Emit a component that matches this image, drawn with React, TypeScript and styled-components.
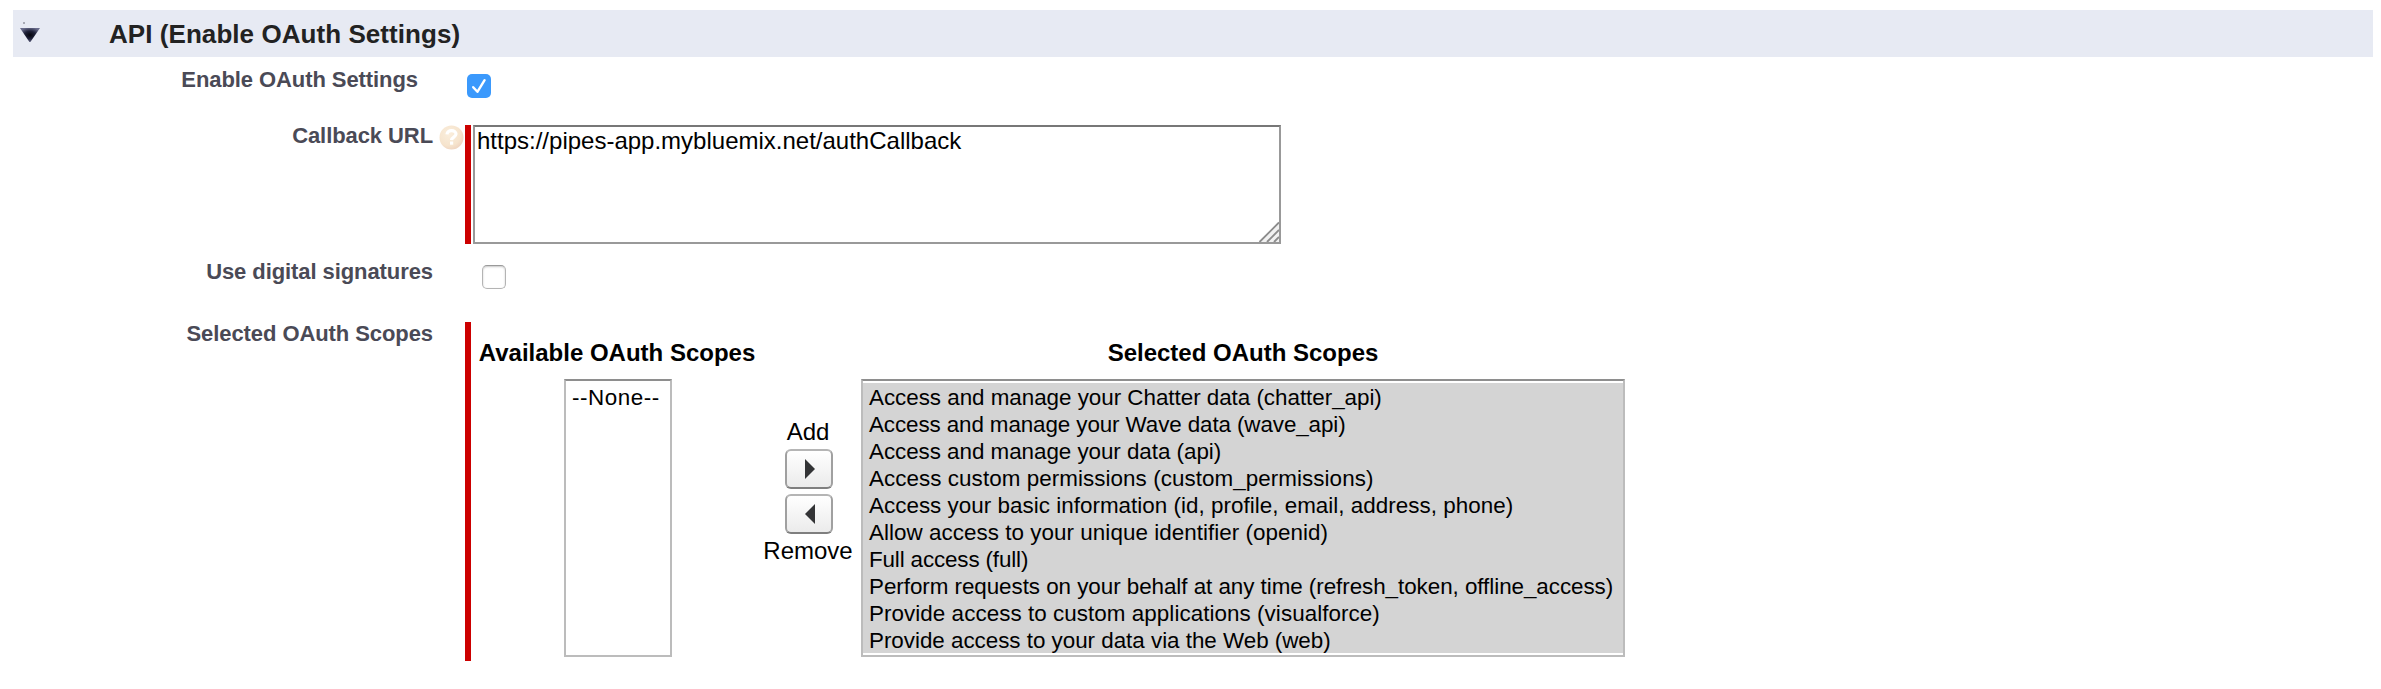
import React from "react";
import styled, { createGlobalStyle } from "styled-components";

const GlobalStyle = createGlobalStyle`
  *, *::before, *::after { box-sizing: border-box; }
  body {
    margin: 0;
    background: #fff;
    color: #000;
    font-family: "Liberation Sans", Arial, Helvetica, sans-serif;
  }
`;

const Page = styled.main`
  padding: 10px 8px 0 0;
`;

const SectionHeader = styled.header`
  display: flex;
  align-items: center;
  height: 47px;
  margin-left: 13px;
  padding-left: 6px;
  background: #e7eaf3;
`;

const SectionTitle = styled.h3`
  margin: 0 0 0 68px;
  font-size: 26px;
  line-height: 30px;
  letter-spacing: 0.06px;
  color: #222;
`;

const FormRow = styled.div<{ $height: number }>`
  display: flex;
  align-items: flex-start;
  height: ${(p) => p.$height}px;
`;

const LabelCell = styled.div<{ $top: number; $right: number }>`
  display: flex;
  justify-content: flex-end;
  align-items: flex-start;
  gap: 6px;
  flex: none;
  width: 465px;
  padding: ${(p) => p.$top}px ${(p) => p.$right}px 0 0;
`;

const Label = styled.label`
  font-size: 22px;
  line-height: 26px;
  font-weight: 700;
  letter-spacing: -0.08px;
  white-space: nowrap;
  color: #4a4a56;
`;

const Field = styled.div<{ $top: number; $left?: number }>`
  display: flex;
  padding: ${(p) => p.$top}px 0 0 ${(p) => p.$left ?? 0}px;
`;

const Checkbox = styled.span<{ $checked?: boolean }>`
  display: block;
  width: 24px;
  height: 24px;
  border-radius: 5px;
  border: ${(p) => (p.$checked ? "none" : "1px solid #b4b4b4")};
  border-top-color: #9a9a9a;
  background: ${(p) => (p.$checked ? "#3b99fc" : "#fff")};
  box-shadow: ${(p) => (p.$checked ? "none" : "inset 0 1px 2px rgba(0,0,0,.22)")};
`;

const RequiredBar = styled.div<{ $height: number }>`
  flex: none;
  width: 6px;
  height: ${(p) => p.$height}px;
  background: #c00;
`;

const TextAreaFrame = styled.div`
  position: relative;
  margin-left: 2px;
  height: 119px;
`;

const TextArea = styled.textarea`
  display: block;
  width: 808px;
  height: 119px;
  margin: 0;
  padding: 1px 2px 0;
  border: 2px solid #999;
  border-top-color: #777;
  border-radius: 0;
  outline: none;
  resize: none;
  overflow: hidden;
  background: #fff;
  color: #000;
  font: 24px/26px "Liberation Sans", Arial, sans-serif;
`;

const ResizeGrip = styled.svg`
  position: absolute;
  right: 2px;
  bottom: 2px;
`;

const PickList = styled.div`
  display: flex;
  padding: 17px 0 0 8px;
`;

const PickColumn = styled.div<{ $width: number }>`
  display: flex;
  flex-direction: column;
  align-items: center;
  width: ${(p) => p.$width}px;
`;

const PickTitle = styled.div`
  height: 28px;
  margin-bottom: 12px;
  font-size: 24px;
  line-height: 28px;
  font-weight: 700;
  white-space: nowrap;
`;

const ListBox = styled.ul<{ $width: number; $shift?: number }>`
  width: ${(p) => p.$width}px;
  height: 278px;
  margin: 0 0 0 ${(p) => p.$shift ?? 0}px;
  padding: 2px 0;
  list-style: none;
  border: 2px solid #bcbcbc;
  border-top-color: #8e8e8e;
  background: #fff;
`;

const Option = styled.li<{ $tracking: number; $selected?: boolean }>`
  height: 27px;
  padding-left: 6px;
  font-size: 22.4px;
  line-height: 29px;
  letter-spacing: ${(p) => p.$tracking}px;
  white-space: nowrap;
  background: ${(p) => (p.$selected ? "#d4d4d4" : "transparent")};
`;

const MoveColumn = styled.div`
  display: flex;
  flex-direction: column;
  align-items: center;
  width: 106px;
  padding-top: 79px;
`;

const MoveLabel = styled.span`
  font-size: 24px;
  line-height: 28px;
`;

const MoveButtons = styled.div`
  display: flex;
  flex-direction: column;
  gap: 5px;
  margin: 3px 0 3px 2px;
`;

const MoveButton = styled.button`
  display: flex;
  align-items: center;
  justify-content: center;
  width: 48px;
  height: 40px;
  padding: 0 0 0 2px;
  border: 2px solid;
  border-color: #b5b5b5 #a0a0a0 #7f7f7f #a0a0a0;
  border-radius: 6px;
  background: linear-gradient(#fff, #ebebeb);
`;

const HelpIcon = styled.svg`
  margin-top: 2px;
`;

const DisclosureIcon = () => (
  <svg width="22" height="24" viewBox="0 0 22 24">
    <defs>
      <radialGradient id="disclosure" cx="0.5" cy="0.5" r="0.55">
        <stop offset="0" stopColor="#05050c" />
        <stop offset="0.5" stopColor="#1f2138" />
        <stop offset="1" stopColor="#6a6d8c" />
      </radialGradient>
    </defs>
    <rect x="4" y="0" width="2" height="2" fill="#a9abb5" />
    <path d="M1 6h20l-9.6 14h-1z" fill="url(#disclosure)" />
  </svg>
);

const CheckIcon = () => (
  <svg width="24" height="24" viewBox="0 0 24 24" fill="none">
    <path d="M6.2 13.2l4.2 4.6L17.6 6.2" stroke="#fff" strokeWidth="2.4" strokeLinecap="round" strokeLinejoin="round" />
  </svg>
);

const HelpBadge = () => (
  <HelpIcon width="25" height="25" viewBox="0 0 25 25" fill="none">
    <defs>
      <radialGradient id="help" cx="0.4" cy="0.35" r="0.7">
        <stop offset="0" stopColor="#faeedd" />
        <stop offset="0.7" stopColor="#f6e4cd" />
        <stop offset="1" stopColor="#eed3bf" />
      </radialGradient>
    </defs>
    <circle cx="12.5" cy="12.5" r="12" fill="url(#help)" />
    <path d="M8 9.4c.2-5 9-5 9-.3 0 3-4.4 2.9-4.500 6" stroke="#fff" strokeWidth="3.2" />
    <rect x="11" y="16.5" width="3.2" height="3.2" fill="#fff" />
  </HelpIcon>
);

const availableScopes = [{ text: "--None--", tracking: 0.55 }];

const selectedScopes = [
  { text: "Access and manage your Chatter data (chatter_api)", tracking: -0.025 },
  { text: "Access and manage your Wave data (wave_api)", tracking: -0.1 },
  { text: "Access and manage your data (api)", tracking: -0.04 },
  { text: "Access custom permissions (custom_permissions)", tracking: 0.065 },
  { text: "Access your basic information (id, profile, email, address, phone)", tracking: 0.03 },
  { text: "Allow access to your unique identifier (openid)", tracking: 0.05 },
  { text: "Full access (full)", tracking: -0.14 },
  { text: "Perform requests on your behalf at any time (refresh_token, offline_access)", tracking: -0.045 },
  { text: "Provide access to custom applications (visualforce)", tracking: 0.06 },
  { text: "Provide access to your data via the Web (web)", tracking: -0.02 },
];

export default function App() {
  return (
    <>
      <GlobalStyle />
      <Page>
        <SectionHeader>
          <DisclosureIcon />
          <SectionTitle>API (Enable OAuth Settings)</SectionTitle>
        </SectionHeader>

        <FormRow $height={62}>
          <LabelCell $top={10} $right={47}>
            <Label>Enable OAuth Settings</Label>
          </LabelCell>
          <Field $top={17} $left={2}>
            <Checkbox $checked><CheckIcon /></Checkbox>
          </Field>
        </FormRow>

        <FormRow $height={136}>
          <LabelCell $top={4} $right={1}>
            <Label>Callback URL</Label>
            <HelpBadge />
          </LabelCell>
          <Field $top={6}>
            <RequiredBar $height={119} />
            <TextAreaFrame>
              <TextArea readOnly spellCheck={false} value="https://pipes-app.mybluemix.net/authCallback" />
              <ResizeGrip width="22" height="22" viewBox="0 0 22 22" fill="none">
                <path d="M2 22L22 2V22Z" fill="#f1f1f1" />
                <path d="M2.5 22L22 2.5M10 22L22 10M17 22L22 17" stroke="#8c8c8c" strokeWidth="1.9" />
              </ResizeGrip>
            </TextAreaFrame>
          </Field>
        </FormRow>

        <FormRow $height={61}>
          <LabelCell $top={4} $right={32}>
            <Label>Use digital signatures</Label>
          </LabelCell>
          <Field $top={10} $left={17}>
            <Checkbox />
          </Field>
        </FormRow>

        <FormRow $height={345}>
          <LabelCell $top={5} $right={32}>
            <Label>Selected OAuth Scopes</Label>
          </LabelCell>
          <Field $top={6}>
            <RequiredBar $height={339} />
            <PickList>
              <PickColumn $width={276}>
                <PickTitle>Available OAuth Scopes</PickTitle>
                <ListBox $width={108} $shift={2}>
                  {availableScopes.map((s) => (
                    <Option key={s.text} $tracking={s.tracking}>{s.text}</Option>
                  ))}
                </ListBox>
              </PickColumn>
              <MoveColumn>
                <MoveLabel>Add</MoveLabel>
                <MoveButtons>
                  <MoveButton aria-label="Add">
                    <svg width="10" height="20" viewBox="0 0 10 20"><path d="M0 0L10 10L0 20Z" fill="#333436" /></svg>
                  </MoveButton>
                  <MoveButton aria-label="Remove">
                    <svg width="10" height="20" viewBox="0 0 10 20"><path d="M10 0L0 10L10 20Z" fill="#333436" /></svg>
                  </MoveButton>
                </MoveButtons>
                <MoveLabel>Remove</MoveLabel>
              </MoveColumn>
              <PickColumn $width={764}>
                <PickTitle>Selected OAuth Scopes</PickTitle>
                <ListBox $width={764}>
                  {selectedScopes.map((s) => (
                    <Option key={s.text} $tracking={s.tracking} $selected>{s.text}</Option>
                  ))}
                </ListBox>
              </PickColumn>
            </PickList>
          </Field>
        </FormRow>
      </Page>
    </>
  );
}
